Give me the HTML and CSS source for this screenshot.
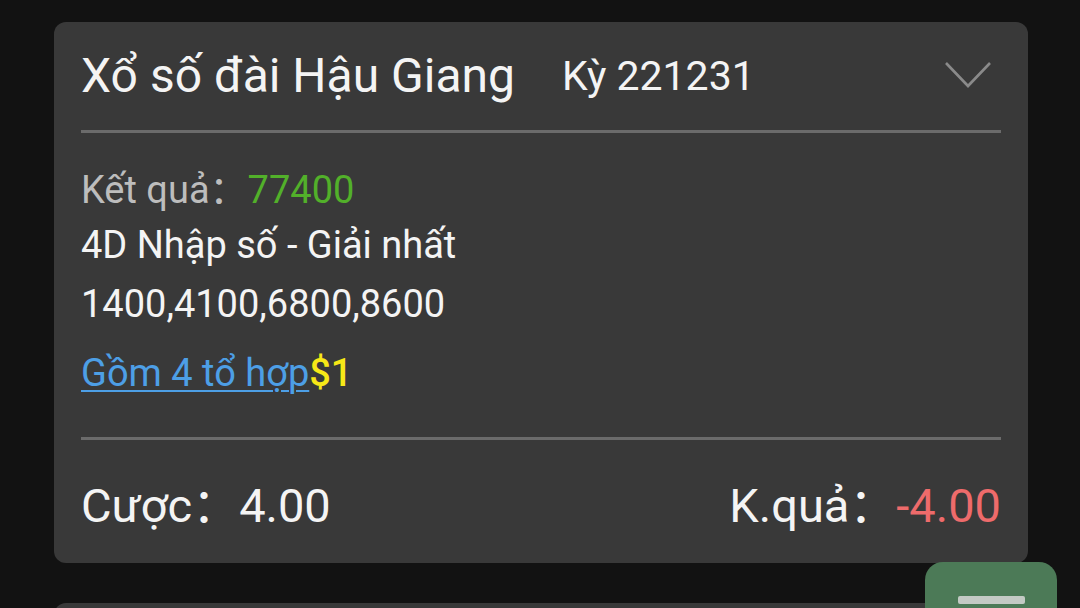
FILE: index.html
```html
<!DOCTYPE html>
<html lang="vi">
<head>
<meta charset="UTF-8">
<meta name="viewport" content="width=device-width,initial-scale=1.0">
<title>Lịch sử cược</title>
<link rel="stylesheet" href="styles.css">
</head>
<body>
<div class="list">
<div class="card">
<div class="card-head">
<span class="title">Xổ số đài Hậu Giang</span>
<span class="period">Kỳ 221231</span>
<svg class="chevron" width="48" height="28" viewBox="0 0 48 28"><polyline points="2,2 24,25 46,2" fill="none" stroke="#8a8a8a" stroke-width="2.6"/></svg>
</div>
<div class="card-body">
<div class="line result"><span class="label">Kết quả：</span><span class="win-num">77400</span></div>
<div class="line">4D Nhập số - Giải nhất</div>
<div class="line numbers">1400,4100,6800,8600</div>
<div class="line combo"><a href="#" class="combo-link">Gồm 4 tổ hợp</a><span class="unit">$1</span></div>
</div>
<div class="card-foot">
<span>Cược：4.00</span>
<span>K.quả：<span class="loss">-4.00</span></span>
</div>
</div>
<div class="card next"></div>
</div>
<div class="fab"><span class="fab-bar"></span></div>
</body>
</html>
```
FILE: styles.css
```css
html,body{
height:100%;
}
body{
margin:0;
background:#121212;
font-family:Roboto,"Noto Sans CJK SC",sans-serif;
color:#f4f4f4;
overflow:hidden;
}
.list{
padding:22px 52px 0 54px;
}
.card{
background:#393939;
border-radius:12px;
padding:0 27px;
}
.card.next{
margin-top:40px;
height:120px;
}
.card-head{
display:flex;
align-items:center;
height:108px;
border-bottom:3px solid #6b6b6b;
line-height:56px;
}
.title{
font-size:48px;
}
.period{
font-size:41px;
margin-left:47px;
}
.chevron{
margin-left:auto;
margin-right:9px;
margin-top:-2px;
}
.card-body{
padding:30px 0 36px;
border-bottom:3px solid #6b6b6b;
font-size:38px;
}
.line{
line-height:55px;
height:55px;
}
.numbers{
margin-top:4px;
}
.combo{
margin-top:14px;
}
.label{
color:#bdbdbd;
}
.win-num{
color:#52b02a;
}
.combo-link{
color:#4d9fe6;
text-decoration:underline;
text-decoration-thickness:2px;
text-underline-offset:4px;
}
.unit{
color:#f7e817;
font-weight:500;
}
.card-foot{
display:flex;
justify-content:space-between;
padding:39px 0 30px;
font-size:47px;
line-height:54px;
height:54px;
}
.loss{
color:#ee6b6b;
}
.fab{
position:fixed;
left:925px;
top:562px;
width:132px;
height:90px;
background:#4c7a57;
border-radius:18px;
display:flex;
justify-content:center;
}
.fab-bar{
margin-top:34px;
width:67px;
height:8px;
background:#c3cac4;
border-radius:2px;
}
```
